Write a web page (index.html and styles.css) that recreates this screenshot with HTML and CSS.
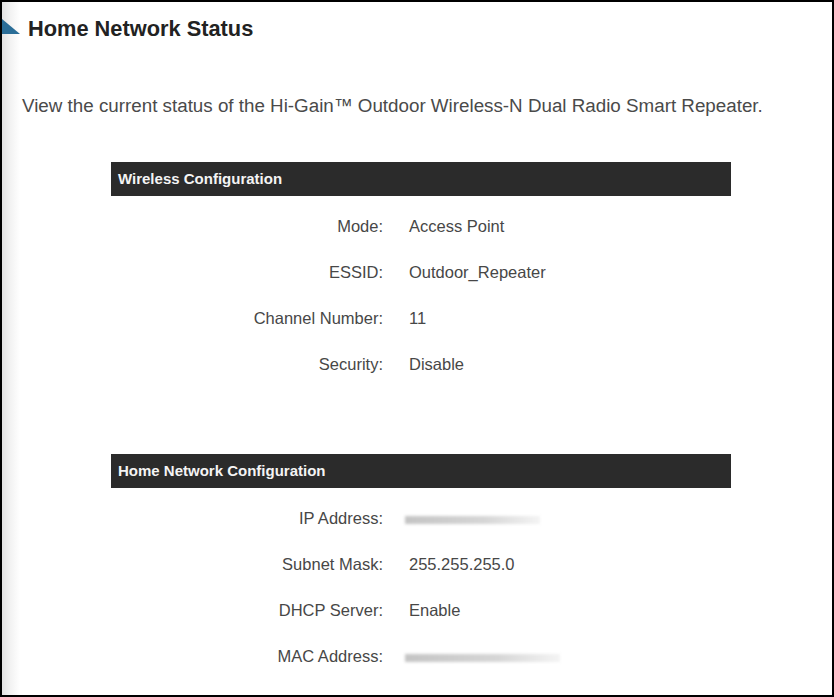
FILE: index.html
```html
<!DOCTYPE html>
<html lang="en">
<head>
  <meta charset="UTF-8">
  <title>Home Network Status</title>
  <link rel="stylesheet" href="styles.css">
</head>
<body>
  <div class="frame">
    <header class="page-head">
      <svg class="marker" width="18" height="24" viewBox="0 0 18 24">
        <polygon points="0,2 18,17 0,17" fill="#2a6d97"/>
      </svg>
      <h1>Home Network Status</h1>
    </header>

    <p class="intro">View the current status of the Hi-Gain&trade; Outdoor Wireless-N Dual Radio Smart Repeater.</p>

    <section class="status-block first">
      <div class="bar">Wireless Configuration</div>
      <div class="rows">
        <div class="label">Mode:</div><div class="value">Access Point</div>
        <div class="label">ESSID:</div><div class="value">Outdoor_Repeater</div>
        <div class="label">Channel Number:</div><div class="value">11</div>
        <div class="label">Security:</div><div class="value">Disable</div>
      </div>
    </section>

    <section class="status-block">
      <div class="bar">Home Network Configuration</div>
      <div class="rows">
        <div class="label">IP Address:</div><div class="value"><span class="hidden-val ip"></span></div>
        <div class="label">Subnet Mask:</div><div class="value">255.255.255.0</div>
        <div class="label">DHCP Server:</div><div class="value">Enable</div>
        <div class="label">MAC Address:</div><div class="value"><span class="hidden-val mac"></span></div>
      </div>
    </section>
  </div>
</body>
</html>
```

FILE: styles.css
```css
html, body {
  margin: 0;
  padding: 0;
}

body {
  font-family: 'Liberation Sans', Arial, sans-serif;
  background: #fff;
  color: #444;
}

.frame {
  box-sizing: border-box;
  width: 834px;
  height: 697px;
  border: 2px solid #000;
  background: linear-gradient(to right, #e2e2e2 0, #f2f2f2 8px, #fff 18px);
  overflow: hidden;
}

.page-head {
  display: flex;
  align-items: center;
  height: 24px;
  margin-top: 15px;
}

.marker {
  flex: none;
  margin-right: 8px;
}

h1 {
  margin: 0;
  font-size: 21.8px;
  line-height: 24px;
  font-weight: bold;
  color: #222;
}

.intro {
  margin: 54px 0 0 20px;
  font-size: 18.8px;
  line-height: 22px;
  color: #4a4a4a;
  white-space: nowrap;
}

.status-block {
  width: 620px;
  margin-left: 109px;
  margin-top: 67px;
}

.status-block.first {
  margin-top: 45px;
}

.bar {
  height: 34px;
  line-height: 34px;
  padding-left: 7px;
  background: #2b2b2b;
  color: #f4f4f4;
  font-size: 15px;
  font-weight: bold;
}

.rows {
  display: grid;
  grid-template-columns: 272px 1fr;
  column-gap: 26px;
  margin-top: 7px;
  font-size: 16.5px;
  color: #474747;
}

.label,
.value {
  height: 46px;
  line-height: 46px;
}

.label {
  text-align: right;
}

.hidden-val {
  display: inline-block;
  vertical-align: middle;
  height: 8px;
  margin-left: -4px;
  background: linear-gradient(to right, #c4c4c4, #d6d6d6 60%, #f4f4f4);
  filter: blur(1.5px);
}

.hidden-val.ip {
  width: 135px;
}

.hidden-val.mac {
  width: 155px;
}
```
